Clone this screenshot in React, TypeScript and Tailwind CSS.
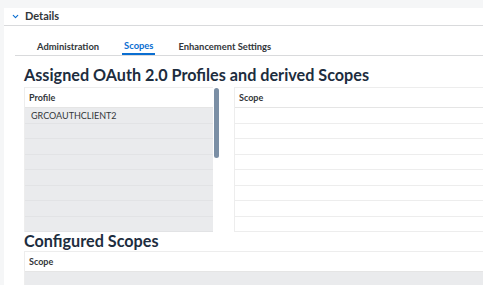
import { ChevronDown } from 'lucide-react';

const rows = Array.from({ length: 8 });

function HeaderCell({ label }: { label: string }) {
  return (
    <div className="h-[20px] flex items-center px-[4px] border-b border-[#e5e5e5] bg-white text-[9px] font-bold text-[#32363a]">
      {label}
    </div>
  );
}

export default function App() {
  return (
    <div className="w-[483px] h-[285px] overflow-hidden bg-[#f5f6f7] pl-[4px] pt-[8px] font-['Lato',sans-serif]">
      <div className="bg-white h-full">
        {/* Details header */}
        <div className="h-[18px] flex items-center border-b border-[#d9dadc] pl-[7px]">
          <ChevronDown className="w-[9px] h-[9px] text-[#0a6ed1]" strokeWidth={3} />
          <span className="ml-[5px] text-[11px] font-bold text-[#32363a]">Details</span>
        </div>

        {/* Tabs */}
        <div className="ml-[11px] h-[30px] flex items-end border-b border-[#d9dadc] text-[9.4px] font-bold text-[#32363a]">
          <div className="pl-[22px] pb-[1px]">Administration</div>
          <div className="ml-[23px] px-[2px] pb-0 border-b-2 border-[#0a6ed1] text-[#0a6ed1]">Scopes</div>
          <div className="ml-[23px] pb-[1px]">Enhancement Settings</div>
        </div>

        <div className="pl-[20px]">
          <h2 className="mt-[10px] text-[16.2px] leading-[18px] font-bold text-[#1d2d3e] whitespace-nowrap">
            Assigned OAuth 2.0 Profiles and derived Scopes
          </h2>

          <div className="mt-[3px] flex">
            {/* Profile table */}
            <div className="relative w-[189px] border-l border-t border-[#ededed]">
              <HeaderCell label="Profile" />
              {rows.map((_, i) => (
                <div
                  key={i}
                  className="h-[15.5px] flex items-center pl-[6px] bg-[#eaebed] border-b border-[#e2e3e5] text-[9px] text-[#32363a]"
                >
                  {i === 0 ? 'GRCOAUTHCLIENT2' : ''}
                </div>
              ))}
              <div className="absolute left-[189px] top-0 w-[5px] h-[70px] rounded-full bg-[#7b8fa5]" />
            </div>

            {/* Scope table */}
            <div className="ml-[21px] flex-1 border-l border-t border-[#ededed]">
              <HeaderCell label="Scope" />
              {rows.map((_, i) => (
                <div key={i} className="h-[15.5px] bg-white border-b border-[#ededed]" />
              ))}
            </div>
          </div>

          <h2 className="text-[16.2px] leading-[18px] font-bold text-[#1d2d3e]">Configured Scopes</h2>

          <div className="mt-[1px] border-l border-t border-[#ededed]">
            <HeaderCell label="Scope" />
            <div className="h-[15.5px] bg-[#eaebed]" />
          </div>
        </div>
      </div>
    </div>
  );
}
